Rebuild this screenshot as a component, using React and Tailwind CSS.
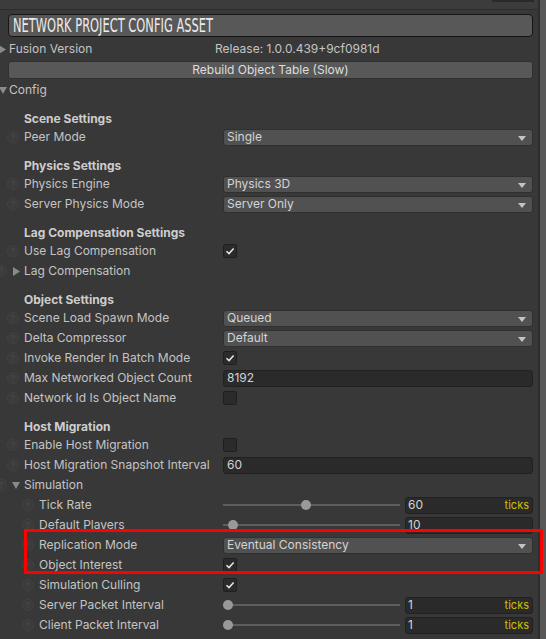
import React from 'react';

const font = { fontFamily: 'Inter, "Noto Sans", sans-serif' };

const Help = ({ className = '' }) => (
  <div className={`w-3 h-3 shrink-0 rounded-full border border-[#424242] bg-[#3b3b3b] text-[#474747] text-[8px] font-bold leading-none flex items-center justify-center ${className}`}>?</div>
);

const ArrowRight = ({ className = '' }) => (
  <svg width="7" height="9" viewBox="0 0 7 9" className={className}>
    <path d="M0 0 L7 4.5 L0 9 Z" fill="#8a8a8a" />
  </svg>
);

const ArrowDown = ({ className = '' }) => (
  <svg width="8" height="7" viewBox="0 0 8 7" className={className}>
    <path d="M0 0 L8 0 L4 7 Z" fill="#8a8a8a" />
  </svg>
);

const Dropdown = ({ value }) => (
  <div className="relative flex-1 h-[17px] bg-[#515151] border border-[#303030] rounded-[3px] flex items-center pl-[3px] text-[#d4d4d4]">
    {value}
    <svg width="8" height="5" viewBox="0 0 8 5" className="absolute right-[6px] top-[6px]">
      <path d="M0 0 L8 0 L4 5 Z" fill="#c4c4c4" />
    </svg>
  </div>
);

const Checkbox = ({ checked }) => (
  <div className="w-[14px] h-[14px] bg-[#2b2b2b] border border-[#1f1f1f] rounded-[2px] flex items-center justify-center">
    {checked && (
      <svg width="10" height="10" viewBox="0 0 10 10">
        <path d="M1.5 5.2 L4 7.6 L8.6 2.4" stroke="#e6e6e6" strokeWidth="1.5" fill="none" />
      </svg>
    )}
  </div>
);

const Field = ({ value }) => (
  <div className="flex-1 h-[17px] bg-[#2a2a2a] border border-[#212121] rounded-[3px] flex items-center pl-[3px] text-[#d4d4d4]">
    {value}
  </div>
);

const Slider = ({ value, thumb, ticks }) => (
  <div className="flex-1 flex items-center">
    <div className="relative w-[177px] h-[10px] flex items-center">
      <div className="w-full h-[2px] bg-[#5e5e5e]" />
      <div className="absolute top-0 w-[10px] h-[10px] rounded-full bg-[#999999]" style={{ left: thumb }} />
    </div>
    <div className="ml-[5px] flex-1 h-[17px] bg-[#2a2a2a] border border-[#212121] rounded-[3px] flex items-center justify-between pl-[2px] pr-[3px] text-[#d4d4d4]">
      <span>{value}</span>
      {ticks && <span className="text-[11px] text-[#d2c000]">ticks</span>}
    </div>
  </div>
);

const Row = ({ label, nested, children }) => (
  <div className="flex h-5 items-center pr-[5px]">
    <div className={`w-[223px] shrink-0 flex items-center ${nested ? 'pl-[22px]' : 'pl-[7px]'}`}>
      <Help />
      <span className="ml-[5px] whitespace-nowrap">{label}</span>
    </div>
    {children}
  </div>
);

const Foldout = ({ label, open }) => (
  <div className="flex h-5 items-center">
    <Help className="ml-[-5px]" />
    <div className="w-[11px] flex justify-end pr-[3px] ml-[5px]">
      {open ? <ArrowDown /> : <ArrowRight />}
    </div>
    <span className="ml-[1px]">{label}</span>
  </div>
);

const Header = ({ title }) => (
  <div className="mt-[11px] h-4 flex items-center pl-[24px] font-bold text-[#cdcdcd]">{title}</div>
);

export default function App() {
  return (
    <div className="relative w-[546px] h-[639px] overflow-hidden bg-[#383838] text-[12px] text-[#c4c4c4] flex" style={font}>
      <div className="w-[538px] shrink-0 flex flex-col">
        <div className="relative h-[10px] bg-[#3c3c3c] border-b border-[#2c2c2c]">
          <div className="absolute left-[492px] top-0 w-[42px] h-[2px] bg-[#2a2a2a]" />
        </div>

        <div className="mt-[4px] ml-[8px] mr-[5px] h-[23px] bg-[#585858] border border-[#151515] rounded-[4px] flex items-center pl-[4px] overflow-hidden">
          <span
            className="text-[19px] text-[#ececec] whitespace-nowrap origin-left scale-x-[0.67]"
            style={{ fontFamily: '"Liberation Sans Narrow", "DejaVu Sans Condensed", sans-serif' }}
          >
            NETWORK PROJECT CONFIG ASSET
          </span>
        </div>

        <div className="mt-[2px] flex h-5 items-center">
          <div className="w-[215px] shrink-0 flex items-center">
            <ArrowRight className="ml-[-1px]" />
            <span className="ml-[3px]">Fusion Version</span>
          </div>
          <span>Release: 1.0.0.439+9cf0981d</span>
        </div>

        <div className="mt-[2px] ml-[8px] mr-[5px] h-[18px] bg-[#585858] border border-[#303030] rounded-[3px] flex items-center justify-center text-[#dedede]">
          Rebuild Object Table (Slow)
        </div>

        <div className="mt-[1px] flex h-5 items-center">
          <ArrowDown className="ml-[-1px]" />
          <span className="ml-[2px]">Config</span>
        </div>

        <Header title="Scene Settings" />
        <Row label="Peer Mode"><Dropdown value="Single" /></Row>

        <Header title="Physics Settings" />
        <Row label="Physics Engine"><Dropdown value="Physics 3D" /></Row>
        <Row label="Server Physics Mode"><Dropdown value="Server Only" /></Row>

        <Header title="Lag Compensation Settings" />
        <Row label="Use Lag Compensation"><Checkbox checked /></Row>
        <Foldout label="Lag Compensation" />

        <Header title="Object Settings" />
        <Row label="Scene Load Spawn Mode"><Dropdown value="Queued" /></Row>
        <Row label="Delta Compressor"><Dropdown value="Default" /></Row>
        <Row label="Invoke Render In Batch Mode"><Checkbox checked /></Row>
        <Row label="Max Networked Object Count"><Field value="8192" /></Row>
        <Row label="Network Id Is Object Name"><Checkbox /></Row>

        <Header title="Host Migration" />
        <Row label="Enable Host Migration"><Checkbox /></Row>
        <Row label="Host Migration Snapshot Interval"><Field value="60" /></Row>

        <Foldout label="Simulation" open />
        <Row nested label="Tick Rate"><Slider value="60" thumb={78} ticks /></Row>
        <Row nested label="Default Players"><Slider value="10" thumb={5} /></Row>
        <Row nested label="Replication Mode"><Dropdown value="Eventual Consistency" /></Row>
        <Row nested label="Object Interest"><Checkbox checked /></Row>
        <Row nested label="Simulation Culling"><Checkbox checked /></Row>
        <Row nested label="Server Packet Interval"><Slider value="1" thumb={0} ticks /></Row>
        <Row nested label="Client Packet Interval"><Slider value="1" thumb={0} ticks /></Row>
      </div>

      <div className="flex-1 border-l-2 border-[#2e2e2e] bg-[#585858]" />

      <div className="absolute left-[24px] top-[529px] w-[519px] h-[45px] border-[3px] border-[#ff0000]" />
    </div>
  );
}
